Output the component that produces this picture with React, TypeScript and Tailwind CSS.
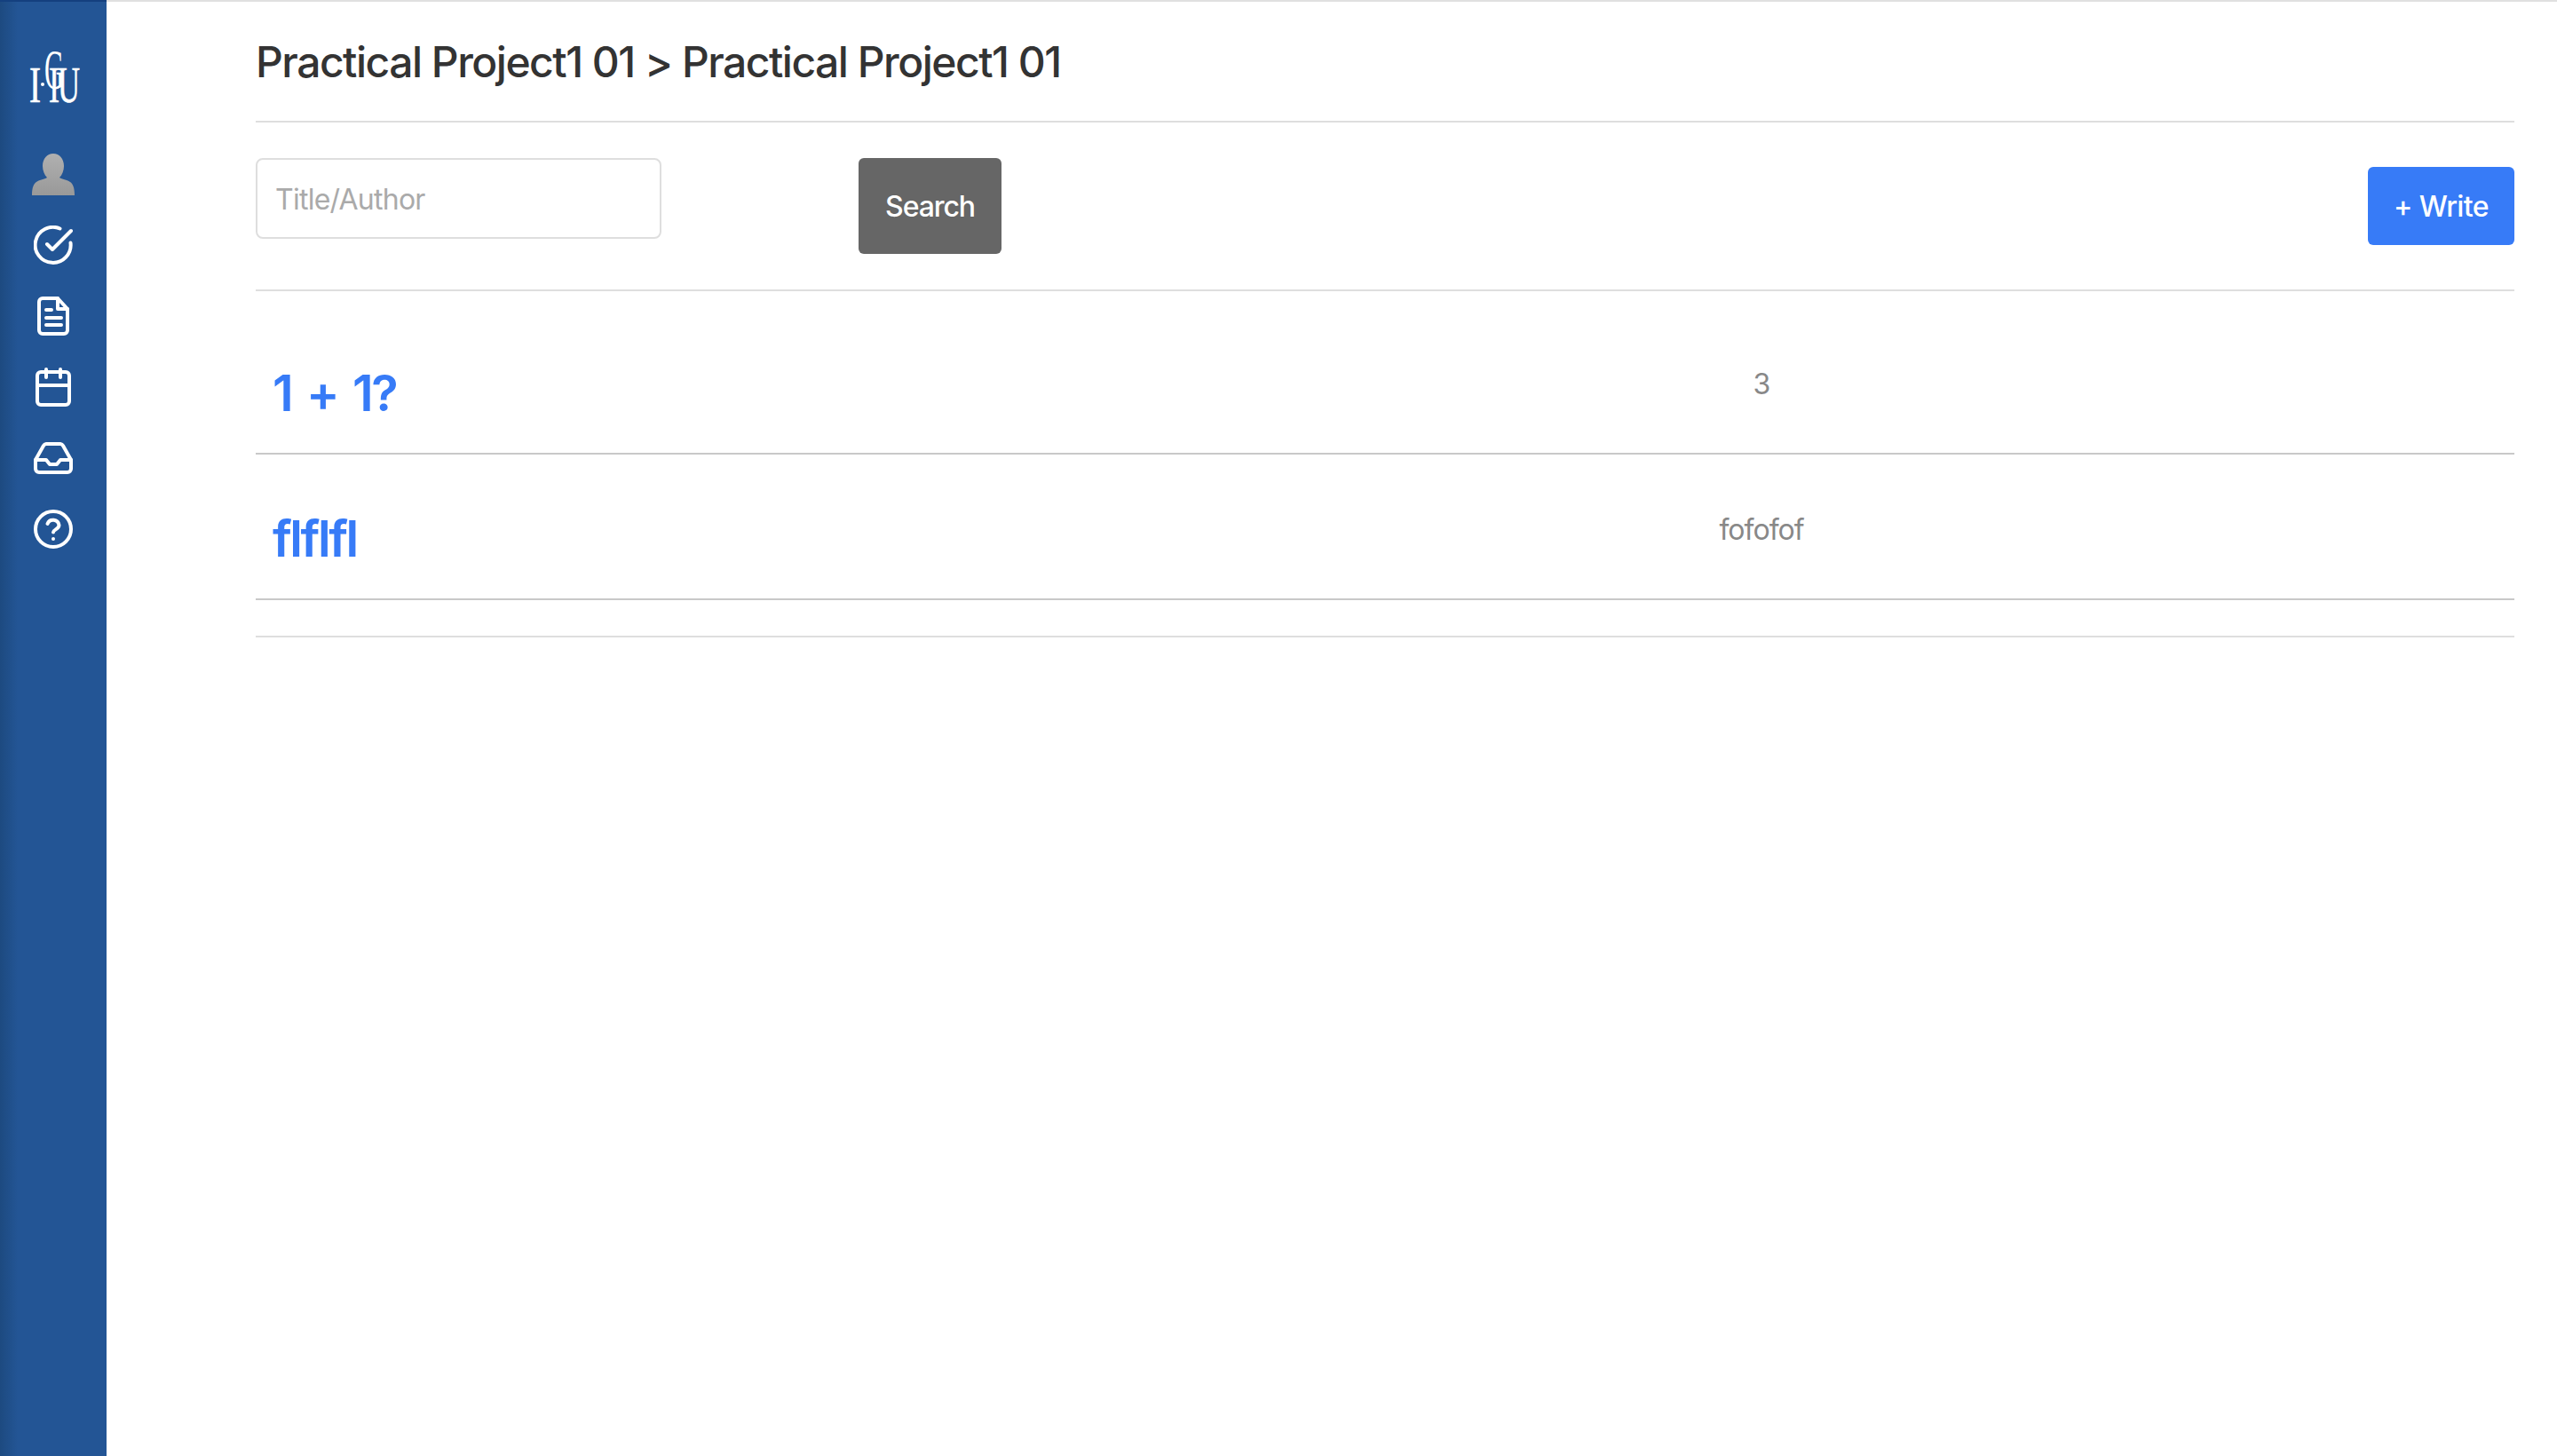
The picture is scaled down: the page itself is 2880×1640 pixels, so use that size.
const font = "font-['Inter','Liberation_Sans',sans-serif]";

const rows = [
  { title: "1 + 1?", author: "3" },
  { title: "flflfl", author: "fofofof" },
];

function Logo() {
  return (
    <svg width="60" height="60" viewBox="0 0 60 60" className="shrink-0 overflow-visible" fill="#fff" fontFamily="'Liberation Serif', serif">
      <g stroke="#fff" strokeWidth="0.7">
        <text x="3" y="59" fontSize="58" textLength="13" lengthAdjust="spacingAndGlyphs">I</text>
        <text x="25" y="59" fontSize="58" textLength="12" lengthAdjust="spacingAndGlyphs">I</text>
        <text x="35" y="59" fontSize="58" textLength="25" lengthAdjust="spacingAndGlyphs">U</text>
      </g>
      <circle cx="18" cy="39" r="2" />
      <text x="20" y="44" fontSize="64" textLength="22" lengthAdjust="spacingAndGlyphs">G</text>
    </svg>
  );
}

function UserIcon() {
  return (
    <svg width="48" height="47" viewBox="0 0 48 47">
      <defs>
        <linearGradient id="u" x1="0" y1="0" x2="0" y2="1">
          <stop offset="0" stopColor="#b0b0b0" />
          <stop offset="1" stopColor="#999" />
        </linearGradient>
      </defs>
      <path fill="url(#u)" d="M24 0c7 0 12 6 12 14 0 5-2 10-5 13 3 2 8 2 12 5 3 2 5 6 5 15H0c0-9 2-13 5-15 4-3 9-3 12-5-3-3-5-8-5-13C12 6 17 0 24 0z" />
    </svg>
  );
}

function CheckIcon() {
  return (
    <svg width="44" height="44" viewBox="0 0 44 44" fill="none" stroke="#fff" strokeWidth="4" strokeLinecap="round" strokeLinejoin="round">
      <path d="M41.5 19.5A20 20 0 1 1 29.5 3.5" />
      <path d="M15 21l6 6L42 6" />
    </svg>
  );
}

function DocIcon() {
  return (
    <svg width="36" height="44" viewBox="0 0 36 44" fill="none" stroke="#fff" strokeWidth="4" strokeLinecap="round" strokeLinejoin="round">
      <path d="M6 2h17l11 12v24a4 4 0 0 1-4 4H6a4 4 0 0 1-4-4V6a4 4 0 0 1 4-4z" />
      <path d="M23 2v12h11" />
      <path d="M10 15h6M10 24h17M10 32h17" />
    </svg>
  );
}

function CalendarIcon() {
  return (
    <svg width="40" height="44" viewBox="0 0 40 44" fill="none" stroke="#fff" strokeWidth="4" strokeLinecap="round" strokeLinejoin="round">
      <rect x="2" y="5" width="36" height="37" rx="4" />
      <path d="M2 20h36M12 2v9M28 2v9" />
    </svg>
  );
}

function InboxIcon() {
  return (
    <svg width="44" height="36" viewBox="0 0 44 36" fill="none" stroke="#fff" strokeWidth="4" strokeLinecap="round" strokeLinejoin="round">
      <path d="M2 20v10a4 4 0 0 0 4 4h32a4 4 0 0 0 4-4V20L33 4a4 4 0 0 0-3-2H14a4 4 0 0 0-3 2z" />
      <path d="M2 20h12l4 5h8l4-5h12" />
    </svg>
  );
}

function HelpIcon() {
  return (
    <svg width="44" height="44" viewBox="0 0 44 44" fill="none" stroke="#fff" strokeWidth="4" strokeLinecap="round" strokeLinejoin="round">
      <circle cx="22" cy="22" r="20" />
      <path d="M15.5 16a6.8 6.8 0 0 1 13 1.5c0 4.5-6.5 5-6.5 8" />
      <path d="M22 33h.02" />
    </svg>
  );
}

function Sidebar() {
  return (
    <aside className="flex w-[120px] shrink-0 flex-col items-center border-t-2 border-[#14407f] bg-[linear-gradient(90deg,#1d4a80_0px,#235595_20px,#235595_100%)] pt-[54px]">
      <div className="h-[60px]">
        <Logo />
      </div>
      <div className="mt-[57px]">
        <UserIcon />
      </div>
      <div className="mt-[34px]">
        <CheckIcon />
      </div>
      <div className="mt-[36px]">
        <DocIcon />
      </div>
      <div className="mt-[36px]">
        <CalendarIcon />
      </div>
      <div className="mt-[40px]">
        <InboxIcon />
      </div>
      <div className="mt-[40px]">
        <HelpIcon />
      </div>
    </aside>
  );
}

export default function App() {
  return (
    <div className={`flex h-[1640px] w-[2880px] overflow-hidden bg-white ${font}`}>
      <Sidebar />
      <main className="flex min-w-0 flex-1 flex-col border-t-2 border-[#e0e0e0] pl-[168px] pr-[48px]">
        <h1 className="flex h-[136px] items-center border-b-2 border-[#dedede] pt-[2px] text-[48px] font-medium tracking-[-1.5px] text-[#333]">
          Practical Project1 01 &gt; Practical Project1 01
        </h1>
        <div className="flex h-[190px] items-start border-b-2 border-[#dedede] pt-[40px]">
          <input
            placeholder="Title/Author"
            className="h-[91px] w-[457px] rounded-[8px] border-2 border-[#dedede] px-[20px] pt-[1px] text-[32px] tracking-[-0.75px] outline-none placeholder:text-[#aaa]"
          />
          <button className="ml-[222px] h-[108px] w-[161px] rounded-[6px] bg-[#666] pt-[1px] text-[32px] font-medium tracking-[-1.1px] text-white">
            Search
          </button>
          <button className="ml-auto mt-[10px] h-[88px] w-[165px] rounded-[6px] bg-[#377bf7] pt-[1px] text-[32px] font-medium tracking-[-0.6px] text-white">
            + Write
          </button>
        </div>
        <div className="pt-[20px]">
          {rows.map((row) => (
            <div key={row.title} className="grid h-[164px] grid-cols-[1412px_568px] border-b-2 border-[#c9c9c9]">
              <a className="pl-[19px] pt-[57px] text-[56px] font-semibold leading-[76px] tracking-[-2.4px] text-[#377bf7] [word-spacing:5px]">
                {row.title}
              </a>
              <span className="pt-[63px] text-center text-[32px] leading-[44px] tracking-[-1px] text-[#888]">{row.author}</span>
            </div>
          ))}
        </div>
        <div className="mt-[40px] border-b-2 border-[#dedede]" />
      </main>
    </div>
  );
}
